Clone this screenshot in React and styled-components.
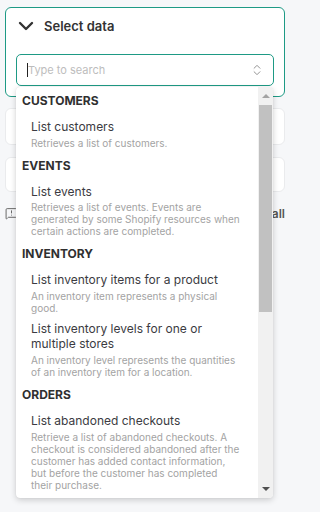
import React from "react";
import styled, { createGlobalStyle } from "styled-components";
import { ChevronDown, ChevronsUpDown, MessageSquareWarning } from "lucide-react";

const GlobalStyle = createGlobalStyle`
  * { box-sizing: border-box; }
  html, body { height: 100%; }
  body {
    margin: 0;
    background: #f6f7f9;
    font-family: Inter, "Noto Sans", sans-serif;
    color: #333;
  }
`;

const groups = [
  {
    name: "Customers",
    items: [{ title: "List customers", desc: "Retrieves a list of customers." }],
  },
  {
    name: "Events",
    items: [
      {
        title: "List events",
        desc: "Retrieves a list of events. Events are generated by some Shopify resources when certain actions are completed.",
      },
    ],
  },
  {
    name: "Inventory",
    items: [
      {
        title: "List inventory items for a product",
        desc: "An inventory item represents a physical good.",
      },
      {
        title: "List inventory levels for one or multiple stores",
        desc: "An inventory level represents the quantities of an inventory item for a location.",
      },
    ],
  },
  {
    name: "Orders",
    items: [
      {
        title: "List abandoned checkouts",
        desc: "Retrieve a list of abandoned checkouts. A checkout is considered abandoned after the customer has added contact information, but before the customer has completed their purchase.",
      },
    ],
  },
];

const Page = styled.div`
  width: 291px;
  height: 512px;
  overflow: hidden;
  padding: 7px 6px 0 5px;
  display: flex;
  flex-direction: column;
`;

const SelectCard = styled.div`
  position: relative;
  z-index: 2;
  background: #fff;
  border: 1px solid #1e9a85;
  border-radius: 6px;
  padding: 0 10px 10px;
`;

const CardHeader = styled.div`
  height: 36px;
  margin: 0 -10px 10px;
  padding: 0 8px;
  display: flex;
  align-items: center;
  gap: 6px;
  color: #333;
  font-size: 13px;
  font-weight: 600;
`;

const SearchWrap = styled.div`
  position: relative;
`;

const SearchBox = styled.div`
  height: 32px;
  border: 1px solid #1e9a85;
  border-radius: 5px;
  display: flex;
  align-items: center;
  padding: 0 9px 0 10px;
  font-size: 11px;
`;

const Caret = styled.span`
  width: 1px;
  height: 14px;
  background: #222;
`;

const Placeholder = styled.span`
  flex: 1;
  color: #bdbdbd;
`;

const Dropdown = styled.div`
  position: absolute;
  z-index: 10;
  top: calc(100% + 1px);
  left: 0;
  width: 257px;
  height: 411px;
  background: #fff;
  border-radius: 4px;
  box-shadow: 0 2px 6px rgba(0, 0, 0, 0.18), 0 0 1px rgba(0, 0, 0, 0.12);
  display: flex;
  overflow: hidden;
`;

const List = styled.div`
  flex: 1;
  overflow: hidden;
`;

const GroupLabel = styled.div`
  padding: 6px 6px 6px;
  line-height: 16px;
  font-size: 12px;
  font-weight: 700;
  text-transform: uppercase;
  color: #303030;
`;

const Option = styled.div`
  padding: 4px 17px 3px 15px;
`;

const OptionTitle = styled.div`
  font-size: 12px;
  line-height: 15.6px;
  color: #3b3b42;
`;

const OptionDesc = styled.div`
  margin-top: 2px;
  font-size: 10px;
  line-height: 12px;
  color: #a3a3a3;
`;

const ScrollTrack = styled.div`
  width: 15px;
  background: #f1f1f1;
  display: flex;
  flex-direction: column;
  align-items: center;
`;

const ScrollButton = styled.div`
  height: 18px;
  width: 100%;
  display: flex;
  align-items: center;
  justify-content: center;
`;

const Arrow = styled.span`
  width: 0;
  height: 0;
  border-left: 4px solid transparent;
  border-right: 4px solid transparent;
  ${(p) =>
    p.$down
      ? `border-top: 4px solid #505050;`
      : `border-bottom: 4px solid #a3a3a3;`}
`;

const Thumb = styled.div`
  width: 13px;
  height: 207px;
  background: #c1c1c1;
`;

const Spacer = styled.div`
  flex: 1;
`;

const InfoCard = styled.div`
  margin-top: ${(p) => p.$gap}px;
  height: ${(p) => p.$h}px;
  flex-shrink: 0;
  background: #fff;
  border: 1px solid #eaebed;
  border-radius: 6px;
`;

const Footer = styled.div`
  margin-top: 14px;
  display: flex;
  align-items: center;
  justify-content: space-between;
  font-size: 12px;
  color: #666;
`;

const FooterLink = styled.span`
  font-weight: 600;
  color: #555;
`;

export default function App() {
  return (
    <>
      <GlobalStyle />
      <Page>
        <SelectCard>
          <CardHeader>
            <ChevronDown size={24} strokeWidth={2.4} color="#333" />
            Select data
          </CardHeader>
          <SearchWrap>
            <SearchBox>
              <Caret />
              <Placeholder>Type to search</Placeholder>
              <ChevronsUpDown size={14} strokeWidth={1.6} color="#8a8a8a" />
            </SearchBox>
            <Dropdown>
              <List>
                {groups.map((g) => (
                  <div key={g.name}>
                    <GroupLabel>{g.name}</GroupLabel>
                    {g.items.map((it) => (
                      <Option key={it.title}>
                        <OptionTitle>{it.title}</OptionTitle>
                        <OptionDesc>{it.desc}</OptionDesc>
                      </Option>
                    ))}
                  </div>
                ))}
              </List>
              <ScrollTrack>
                <ScrollButton>
                  <Arrow />
                </ScrollButton>
                <Thumb />
                <Spacer />
                <ScrollButton>
                  <Arrow $down />
                </ScrollButton>
              </ScrollTrack>
            </Dropdown>
          </SearchWrap>
        </SelectCard>
        <InfoCard $gap={11} $h={37} />
        <InfoCard $gap={12} $h={35} />
        <Footer>
          <MessageSquareWarning size={13} strokeWidth={1.8} color="#666" />
          <FooterLink>See all</FooterLink>
        </Footer>
      </Page>
    </>
  );
}
